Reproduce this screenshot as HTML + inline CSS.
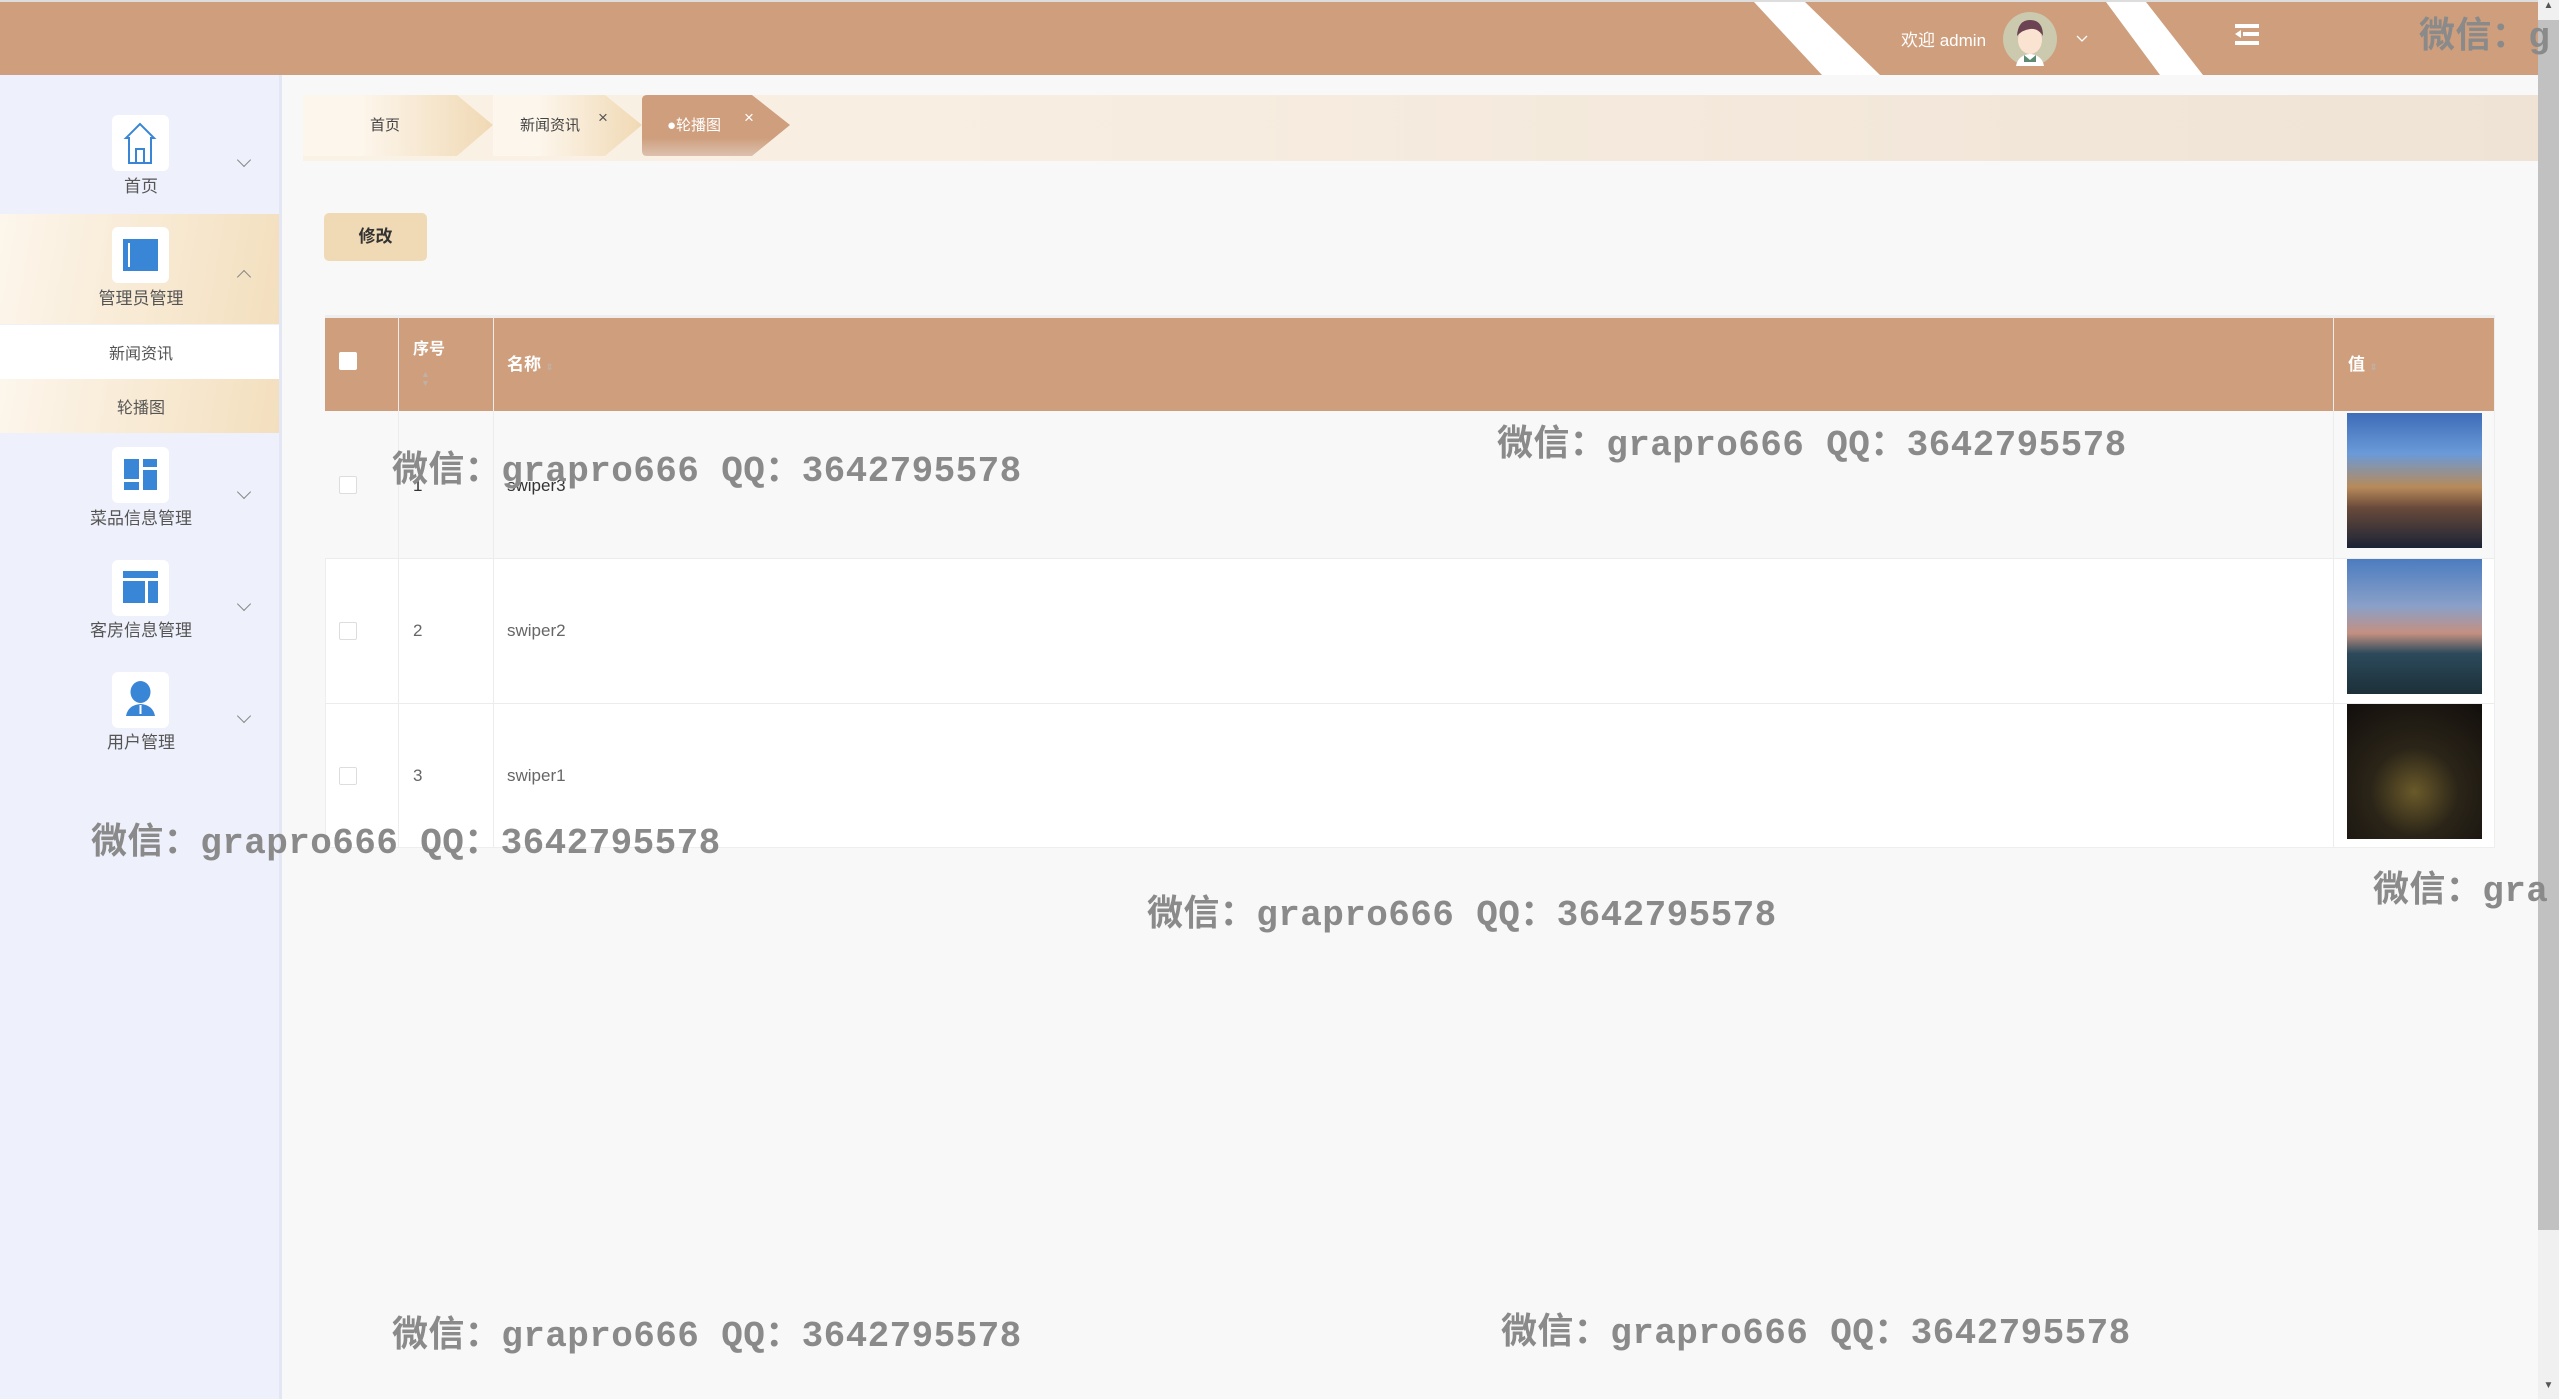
<!DOCTYPE html>
<html><head><meta charset="utf-8"><style>
*{margin:0;padding:0;box-sizing:border-box}
body{width:2559px;height:1399px;overflow:hidden;background:#f8f8f8;font-family:"Liberation Sans","Noto Sans CJK SC",sans-serif;position:relative}
.abs{position:absolute}
#top{left:0;top:0;width:2538px;height:75px;background:#CE9E7D;border-top:2px solid #ddd}
#side{left:0;top:75px;width:282px;height:1324px;background:#EEF1FB;border-right:3px solid #E3E6F3}
.ibox{position:absolute;left:112px;width:57px;height:56px;background:#fff;border-radius:6px}
.lab{position:absolute;left:0;width:282px;text-align:center;font-size:17px;color:#555}
.chev{position:absolute;left:239px;width:10px;height:10px;border-right:1.5px solid #888;border-bottom:1.5px solid #888;transform:rotate(45deg)}
.wm{position:absolute;font-family:"Liberation Mono","Noto Sans CJK SC",monospace;font-size:36px;font-weight:bold;color:#8a8a8a;white-space:nowrap;letter-spacing:0.4px}
.tab{position:absolute;top:95px;height:61px;font-size:15px;color:#444;line-height:61px}
</style></head><body>
<div id="top" class="abs"></div>
<svg class="abs" style="left:0;top:0" width="2538" height="75"><polygon points="1754,2 1805,2 1880,75 1822,75" fill="#fff"/><polygon points="2106,2 2146,2 2203,75 2160,75" fill="#fff"/>
<ellipse cx="2030" cy="39" rx="27" ry="27" fill="#CBC9AE"/><ellipse cx="2030" cy="40" rx="12" ry="14" fill="#FBE3D2"/><path d="M2017 36 Q2018 20 2030 20 Q2043 20 2043 36 Q2038 28 2030 29 Q2022 30 2017 36Z" fill="#6B4352"/><path d="M2016 66 Q2018 55 2030 54 Q2042 55 2044 66Z" fill="#fff"/><path d="M2024 55 L2030 60 L2036 55 L2036 62 L2024 62Z" fill="#5E8B72"/>
<rect x="2235" y="24" width="24" height="4" fill="#fff"/><rect x="2243" y="32" width="16" height="4" fill="#fff"/><rect x="2235" y="41" width="24" height="4" fill="#fff"/><polygon points="2235,34 2241,30 2241,38" fill="#fff"/>
<polyline points="2077,36 2082,41 2087,36" fill="none" stroke="#fff" stroke-width="1.3"/></svg>
<div class="abs" style="left:1901px;top:26px;font-size:17px;color:#fff">欢迎 admin</div>
<div class="abs" style="left:2538px;top:0;width:21px;height:1399px;background:#C1C1C1"></div>
<div class="abs" style="left:2538px;top:0;width:21px;height:20px;background:#f0f0f0;font-size:10px;color:#555;text-align:center">▲</div>
<div class="abs" style="left:2538px;top:1230px;width:21px;height:169px;background:#f0f0f0"></div>
<div class="abs" style="left:2538px;top:1380px;width:21px;height:19px;font-size:10px;color:#555;text-align:center;background:#f0f0f0">▼</div>

<div id="side" class="abs">
 <div class="abs" style="left:0;top:139px;width:279px;height:110px;background:linear-gradient(100deg,#FDF6EC,#F3DFBE)"></div>
 <div class="abs" style="left:0;top:250px;width:279px;height:54px;background:#fff"></div>
 <div class="abs" style="left:0;top:304px;width:279px;height:54px;background:linear-gradient(100deg,#FDF6EC,#F3DFBE)"></div>
</div>
<div class="ibox" style="top:115px"><svg width="57" height="56"><path d="M28 9 L14 23 L17 23 L17 48 L39 48 L39 23 L42 23 Z M24 48 L24 34 L32 34 L32 48" fill="none" stroke="#3A86D6" stroke-width="2"/></svg></div>
<div class="lab" style="top:172px">首页</div><div class="chev" style="top:155px"></div>
<div class="ibox" style="top:227px"><svg width="57" height="56"><rect x="11" y="12" width="35" height="32" fill="#3A86D6"/><rect x="16" y="16" width="2" height="24" fill="#fff"/></svg></div>
<div class="lab" style="top:284px">管理员管理</div><div class="chev" style="top:272px;transform:rotate(225deg)"></div>
<div class="lab" style="top:340px;font-size:16px">新闻资讯</div>
<div class="lab" style="top:394px;font-size:16px">轮播图</div>
<div class="ibox" style="top:447px"><svg width="57" height="56"><rect x="12" y="12" width="15" height="20" fill="#3A86D6"/><rect x="31" y="12" width="14" height="8" fill="#3A86D6"/><rect x="31" y="23" width="14" height="20" fill="#3A86D6"/><rect x="12" y="35" width="15" height="8" fill="#3A86D6"/></svg></div>
<div class="lab" style="top:504px">菜品信息管理</div><div class="chev" style="top:487px"></div>
<div class="ibox" style="top:560px"><svg width="57" height="56"><rect x="11" y="11" width="35" height="7" fill="#3A86D6"/><rect x="11" y="21" width="22" height="22" fill="#3A86D6"/><rect x="36" y="21" width="10" height="22" fill="#3A86D6"/></svg></div>
<div class="lab" style="top:616px">客房信息管理</div><div class="chev" style="top:599px"></div>
<div class="ibox" style="top:672px"><svg width="57" height="56"><ellipse cx="28.5" cy="20" rx="10" ry="11" fill="#3A86D6"/><path d="M14 44 Q16 33 28.5 32 Q41 33 43 44Z" fill="#3A86D6"/><rect x="27.5" y="33" width="2" height="9" fill="#fff"/></svg></div>
<div class="lab" style="top:728px">用户管理</div><div class="chev" style="top:711px"></div>

<div class="abs" style="left:303px;top:95px;width:2235px;height:66px;background:linear-gradient(90deg,#FBF2E6,#EFE3D5)"></div>
<svg class="abs" style="left:303px;top:95px" width="500" height="61">
<defs><linearGradient id="g" x1="0" x2="1"><stop offset="0.3" stop-color="#FDF6EC"/><stop offset="1" stop-color="#F0D9B4"/></linearGradient>
<linearGradient id="a" x1="0" y1="0" x2="0" y2="1"><stop offset="0.7" stop-color="#CE9E7D"/><stop offset="1" stop-color="#DCC0AE"/></linearGradient></defs>
<polygon points="0,0 154,0 190,30 154,61 0,61" fill="url(#g)"/>
<polygon points="190,0 302,0 339,30 302,61 190,61" fill="url(#g)"/>
<path d="M344,0 L449,0 L487,30 L449,61 L344,61 Q339,61 339,56 L339,5 Q339,0 344,0Z" fill="url(#a)"/>
</svg>
<div class="tab" style="left:370px">首页</div>
<div class="tab" style="left:520px">新闻资讯</div><div class="tab" style="left:598px;top:87px;font-size:17px;color:#555">×</div>
<div class="tab" style="left:667px;color:#fff">●轮播图</div><div class="tab" style="left:744px;top:87px;font-size:17px;color:#fff">×</div>

<div class="abs" style="left:324px;top:213px;width:103px;height:48px;background:#F0DAB5;border-radius:5px;font-size:17px;font-weight:bold;color:#333;text-align:center;line-height:48px">修改</div>

<div class="abs" style="left:325px;top:315px;width:2170px;height:533px;background:#fff;border:1px solid #eee;border-top:3px solid #eee"></div>
<div class="abs" style="left:325px;top:318px;width:2169px;height:93px;background:#CE9E7D"></div>
<div class="abs" style="left:325px;top:411px;width:2169px;height:147px;background:#f8f8f8"></div>
<div class="abs" style="left:325px;top:558px;width:2169px;height:1px;background:#ececec"></div>
<div class="abs" style="left:325px;top:703px;width:2169px;height:1px;background:#ececec"></div>
<div class="abs" style="left:398px;top:318px;width:1px;height:530px;background:#ececec"></div>
<div class="abs" style="left:493px;top:318px;width:1px;height:530px;background:#ececec"></div>
<div class="abs" style="left:2333px;top:318px;width:1px;height:530px;background:#ececec"></div>
<div class="abs" style="left:339px;top:352px;width:18px;height:18px;background:#fff;border-radius:2px"></div>
<div class="abs" style="left:413px;top:335px;font-size:16px;font-weight:bold;color:#fff">序号</div>
<div class="abs" style="left:421px;top:370px;font-size:9px;color:#c0b0a6;line-height:9px">▲<br>▼</div>
<div class="abs" style="left:507px;top:350px;font-size:17px;font-weight:bold;color:#fff">名称 <span style="font-size:9px;color:#c0b0a6">⇕</span></div>
<div class="abs" style="left:2348px;top:350px;font-size:17px;font-weight:bold;color:#fff">值 <span style="font-size:9px;color:#c0b0a6">⇕</span></div>
<div class="abs" style="left:339px;top:476px;width:18px;height:18px;border:1px solid #ddd;border-radius:2px;background:#fff"></div>
<div class="abs" style="left:339px;top:622px;width:18px;height:18px;border:1px solid #ddd;border-radius:2px;background:#fff"></div>
<div class="abs" style="left:339px;top:767px;width:18px;height:18px;border:1px solid #ddd;border-radius:2px;background:#fff"></div>
<div class="abs" style="left:413px;top:476px;font-size:17px;color:#333">1</div>
<div class="abs" style="left:507px;top:476px;font-size:17px;color:#333">swiper3</div>
<div class="abs" style="left:413px;top:621px;font-size:17px;color:#666">2</div>
<div class="abs" style="left:507px;top:621px;font-size:17px;color:#666">swiper2</div>
<div class="abs" style="left:413px;top:766px;font-size:17px;color:#666">3</div>
<div class="abs" style="left:507px;top:766px;font-size:17px;color:#666">swiper1</div>
<div class="abs" style="left:2347px;top:413px;width:135px;height:135px;background:linear-gradient(180deg,#3E6CB8 0%,#6A9AD8 30%,#B88A5A 55%,#6A4A3A 70%,#1B2436 100%)"></div>
<div class="abs" style="left:2347px;top:559px;width:135px;height:135px;background:linear-gradient(180deg,#4C7CC0 0%,#8AA0C8 35%,#C49080 55%,#2C4A5C 70%,#1C3038 100%)"></div>
<div class="abs" style="left:2347px;top:704px;width:135px;height:135px;background:radial-gradient(circle at 50% 65%,#6A5A2A 0%,#2A2418 40%,#120E0C 100%)"></div>

<div class="wm" style="left:392px;top:440px">微信：grapro666 QQ：3642795578</div>
<div class="wm" style="left:1497px;top:414px">微信：grapro666 QQ：3642795578</div>
<div class="wm" style="left:91px;top:812px">微信：grapro666 QQ：3642795578</div>
<div class="wm" style="left:1147px;top:884px">微信：grapro666 QQ：3642795578</div>
<div class="wm" style="left:2373px;top:860px">微信：gra</div>
<div class="wm" style="left:392px;top:1305px">微信：grapro666 QQ：3642795578</div>
<div class="wm" style="left:1501px;top:1302px">微信：grapro666 QQ：3642795578</div>
<div class="wm" style="left:2419px;top:6px">微信：g</div>
</body></html>
